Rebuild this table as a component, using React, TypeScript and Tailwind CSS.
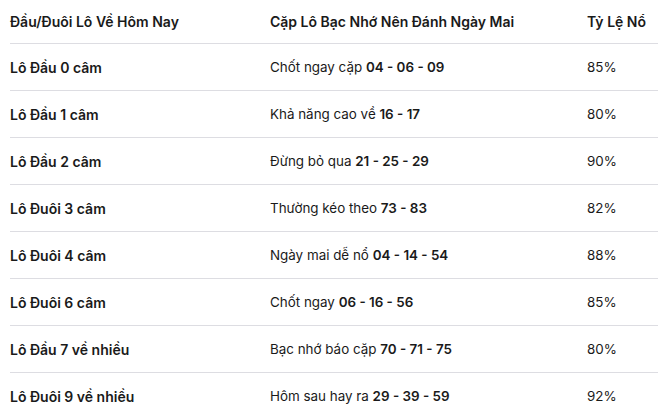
import React from "react";

const rows: [string, string, string, string][] = [
  ["Lô Đầu 0 câm", "Chốt ngay cặp ", "04 - 06 - 09", "85%"],
  ["Lô Đầu 1 câm", "Khả năng cao về ", "16 - 17", "80%"],
  ["Lô Đầu 2 câm", "Đừng bỏ qua ", "21 - 25 - 29", "90%"],
  ["Lô Đuôi 3 câm", "Thường kéo theo ", "73 - 83", "82%"],
  ["Lô Đuôi 4 câm", "Ngày mai dễ nổ ", "04 - 14 - 54", "88%"],
  ["Lô Đuôi 6 câm", "Chốt ngay ", "06 - 16 - 56", "85%"],
  ["Lô Đầu 7 về nhiều", "Bạc nhớ báo cặp ", "70 - 71 - 75", "80%"],
  ["Lô Đuôi 9 về nhiều", "Hôm sau hay ra ", "29 - 39 - 59", "92%"],
];

export default function App() {
  return (
    <div className="w-[664px] h-[412px] overflow-hidden bg-white text-[14px] text-[#1a1a1a]" style={{ fontFamily: "Inter, 'Noto Sans', sans-serif" }}>
      <div className="mx-[10px] w-[648px]">
        <div className="grid grid-cols-[260px_317px_1fr] h-[44px] items-center border-b border-[#dddde2] font-semibold">
          <div>Đầu/Đuôi Lô Về Hôm Nay</div>
          <div>Cặp Lô Bạc Nhớ Nên Đánh Ngày Mai</div>
          <div>Tỷ Lệ Nổ</div>
        </div>
        {rows.map((r, i) => (
          <div key={i} className="grid grid-cols-[260px_317px_1fr] h-[47px] items-center border-b border-[#dddde2]">
            <div className="font-semibold">{r[0]}</div>
            <div className="text-[13.4px]">
              {r[1]}
              <span className="font-semibold">{r[2]}</span>
            </div>
            <div className="text-[13.4px]">{r[3]}</div>
          </div>
        ))}
      </div>
    </div>
  );
}
